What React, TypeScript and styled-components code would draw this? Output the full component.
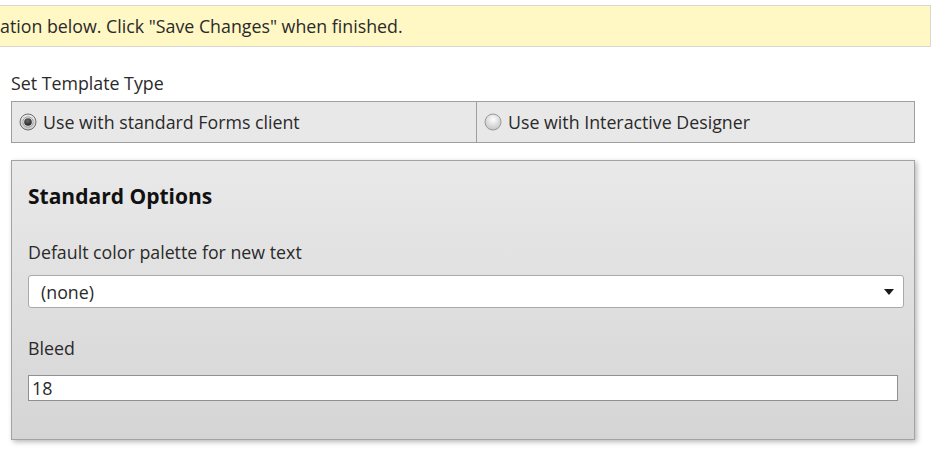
import { FC } from "react";
import styled, { createGlobalStyle } from "styled-components";

const GlobalStyle = createGlobalStyle`
  html, body {
    margin: 0;
    padding: 0;
    background: #ffffff;
  }
  body {
    font-family: "Open Sans", "Noto Sans", "Liberation Sans", sans-serif;
    color: #1f1f1f;
  }
`;

const Page = styled.div`
  width: 938px;
  height: 454px;
  overflow: hidden;
  padding-top: 5px;
  box-sizing: border-box;
`;

const Notice = styled.div`
  width: 931px;
  height: 42px;
  box-sizing: border-box;
  background: #fff7c4;
  border: 1px solid #d8d8d0;
  border-left: none;
  display: flex;
  align-items: center;
  font-size: 17.8px;
  color: #2a2a2a;
  padding-bottom: 1px;
`;

const Body = styled.div`
  width: 904px;
  margin-left: 11px;
  display: flex;
  flex-direction: column;
`;

const FieldLabel = styled.div<{ $top: number }>`
  font-size: 17.8px;
  line-height: 22px;
  color: #2a2a2a;
  margin-top: ${(p) => p.$top}px;
`;

const RadioGroup = styled.div`
  margin-top: 7px;
  height: 42px;
  box-sizing: border-box;
  border: 1px solid #9f9f9f;
  background: #e8e8e8;
  display: grid;
  grid-template-columns: 464px 1fr;
`;

const RadioOption = styled.label<{ $divider?: boolean }>`
  display: flex;
  align-items: center;
  gap: 6px;
  padding-left: 7px;
  font-size: 17.8px;
  color: #2a2a2a;
  border-left: ${(p) => (p.$divider ? "1px solid #9f9f9f" : "none")};
`;

const Panel = styled.div`
  margin-top: 17px;
  height: 280px;
  box-sizing: border-box;
  border: 1px solid #a3a3a3;
  background: linear-gradient(to bottom, #e9e9e9, #d5d5d5);
  box-shadow: 2px 2px 5px rgba(0, 0, 0, 0.28);
  padding: 22px 10px 0 16px;
  display: flex;
  flex-direction: column;
`;

const PanelTitle = styled.div`
  font-size: 21px;
  font-weight: 700;
  line-height: 26px;
  color: #111111;
`;

const Select = styled.div`
  margin-top: 12px;
  height: 33px;
  box-sizing: border-box;
  background: #ffffff;
  border: 1px solid #a9a9a9;
  border-radius: 3px;
  display: flex;
  align-items: center;
  justify-content: space-between;
  padding: 0 9px 0 12px;
  font-size: 17.8px;
  color: #2a2a2a;
`;

const TextBox = styled.div`
  margin-top: 16px;
  width: 870px;
  height: 26px;
  box-sizing: border-box;
  background: #ffffff;
  border: 1px solid #8f8f8f;
  display: flex;
  align-items: center;
  padding-left: 3px;
  font-size: 17.8px;
  color: #2a2a2a;
`;

const RadioIcon: FC<{ checked?: boolean }> = ({ checked }) => (
  <svg width="18" height="18" viewBox="0 0 18 18">
    <defs>
      <radialGradient id="ringFill" cx="50%" cy="35%" r="65%">
        <stop offset="0%" stopColor="#ffffff" />
        <stop offset="100%" stopColor="#c4c4c4" />
      </radialGradient>
      <radialGradient id="dotFill" cx="45%" cy="35%" r="70%">
        <stop offset="0%" stopColor="#6a6a6a" />
        <stop offset="100%" stopColor="#1c1c1c" />
      </radialGradient>
    </defs>
    <circle
      cx="9"
      cy="9"
      r="8"
      fill="url(#ringFill)"
      stroke={checked ? "#6e6e6e" : "#9a9a9a"}
      strokeWidth="1"
    />
    {checked && (
      <>
        <circle cx="9" cy="9" r="5.2" fill="#e6e6e6" stroke="#8a8a8a" strokeWidth="0.8" />
        <circle cx="9" cy="9" r="3.8" fill="url(#dotFill)" />
      </>
    )}
  </svg>
);

const Caret: FC = () => (
  <svg width="10" height="6" viewBox="0 0 10 6">
    <path d="M0 0 H10 L5 6 Z" fill="#1a1a1a" />
  </svg>
);

const App: FC = () => {
  return (
    <>
      <GlobalStyle />
      <Page>
        <Notice>ation below. Click "Save Changes" when finished.</Notice>
        <Body>
          <FieldLabel $top={25}>Set Template Type</FieldLabel>
          <RadioGroup>
            <RadioOption>
              <RadioIcon checked />
              Use with standard Forms client
            </RadioOption>
            <RadioOption $divider>
              <RadioIcon />
              Use with Interactive Designer
            </RadioOption>
          </RadioGroup>
          <Panel>
            <PanelTitle>Standard Options</PanelTitle>
            <FieldLabel $top={32}>Default color palette for new text</FieldLabel>
            <Select>
              <span>(none)</span>
              <Caret />
            </Select>
            <FieldLabel $top={29}>Bleed</FieldLabel>
            <TextBox>18</TextBox>
          </Panel>
        </Body>
      </Page>
    </>
  );
};

export default App;
